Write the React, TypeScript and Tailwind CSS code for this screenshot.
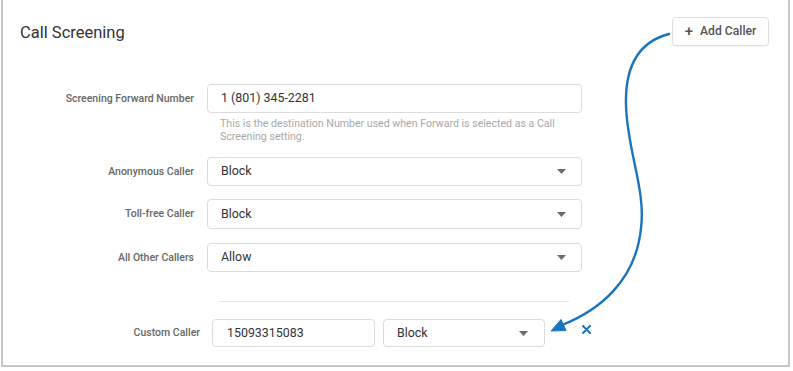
const font = { fontFamily: "Roboto, 'Liberation Sans', sans-serif" };

function Caret() {
    return (
        <svg width="9" height="5" viewBox="0 0 9 5" className="shrink-0">
            <path d="M0 0 L9 0 L4.5 5 Z" fill="#6b6b6b" />
        </svg>
    );
}

function Select({ value, className }: { value: string; className?: string }) {
    return (
        <div className={`flex items-center justify-between rounded-[4px] border border-[#dcdcdc] bg-white pl-[13px] pr-[15px] text-[12.4px] text-[#333] ${className ?? ""}`}>
            <span>{value}</span>
            <Caret />
        </div>
    );
}

function Row({ label, children, className }: { label: string; children: React.ReactNode; className?: string }) {
    return (
        <div className={`flex items-center ${className ?? ""}`}>
            <div className="w-[191px] shrink-0 text-right text-[10.5px] font-medium text-[#666]">{label}</div>
            <div className="ml-[13px] w-[375px]">{children}</div>
        </div>
    );
}

export default function App() {
    return (
        <div className="relative h-[371px] w-[793px] overflow-hidden bg-white" style={font}>
            <div className="ml-[1px] h-[367px] w-[789px] border-2 border-t-0 border-[#c6c6c6]">
                <div className="flex items-start justify-between pl-[17px] pr-[19px] pt-[17px]">
                    <h1 className="mt-[6px] text-[16.5px] leading-[20px] text-[#333]">Call Screening</h1>
                    <button className="flex h-[29px] w-[97px] items-center justify-center gap-[7px] rounded-[4px] border border-[#dedede] bg-white text-[12.2px] font-medium text-[#555] shadow-[0_1px_1px_rgba(0,0,0,0.04)]">
                        <span className="text-[15px] leading-none">+</span>
                        <span>Add Caller</span>
                    </button>
                </div>

                <div className="mt-[38px]">
                    <Row label="Screening Forward Number">
                        <div className="flex h-[29px] items-center rounded-[4px] border border-[#dcdcdc] pl-[13px] text-[12.4px] text-[#333]">
                            1 (801) 345-2281
                        </div>
                    </Row>
                    <div className="ml-[217px] mt-[4px] text-[10.6px] leading-[13px] text-[#a8a8a8]">
                        This is the destination Number used when Forward is selected as a Call
                        <br />
                        Screening setting.
                    </div>

                    <Row label="Anonymous Caller" className="mt-[14px]">
                        <Select value="Block" className="h-[29px]" />
                    </Row>
                    <Row label="Toll-free Caller" className="mt-[13px]">
                        <Select value="Block" className="h-[30px]" />
                    </Row>
                    <Row label="All Other Callers" className="mt-[14px]">
                        <Select value="Allow" className="h-[29px]" />
                    </Row>

                    <div className="ml-[216px] mt-[29px] h-px w-[350px] bg-[#e6e6e6]" />

                    <div className="mt-[17px] flex items-center">
                        <div className="w-[197px] shrink-0 text-right text-[10.5px] font-medium text-[#666]">Custom Caller</div>
                        <div className="ml-[12px] flex h-[28px] w-[163px] items-center rounded-[4px] border border-[#dcdcdc] pl-[14px] text-[12.4px] text-[#333]">
                            15093315083
                        </div>
                        <Select value="Block" className="ml-[8px] h-[28px] w-[162px] pr-[16px]" />
                        <svg width="9" height="9" viewBox="0 0 9 9" className="ml-[37px] mt-[-8px]">
                            <path d="M1 1 L8 8 M8 1 L1 8" stroke="#1b75bc" strokeWidth="2" strokeLinecap="round" />
                        </svg>
                    </div>
                </div>
            </div>

            <svg className="pointer-events-none absolute inset-0" width="793" height="371" viewBox="0 0 793 371">
                <path
                    d="M669 34 C 638 42, 625 68, 626 105 C 627 150, 646 190, 641 228 C 636 280, 600 310, 562 325"
                    fill="none"
                    stroke="#1b75bc"
                    strokeWidth="2.4"
                    strokeLinecap="round"
                />
                <path d="M551 331 L561 319.5 L566 330.5 Z" fill="#1b75bc" stroke="#1b75bc" strokeWidth="1" strokeLinejoin="round" />
            </svg>
        </div>
    );
}
